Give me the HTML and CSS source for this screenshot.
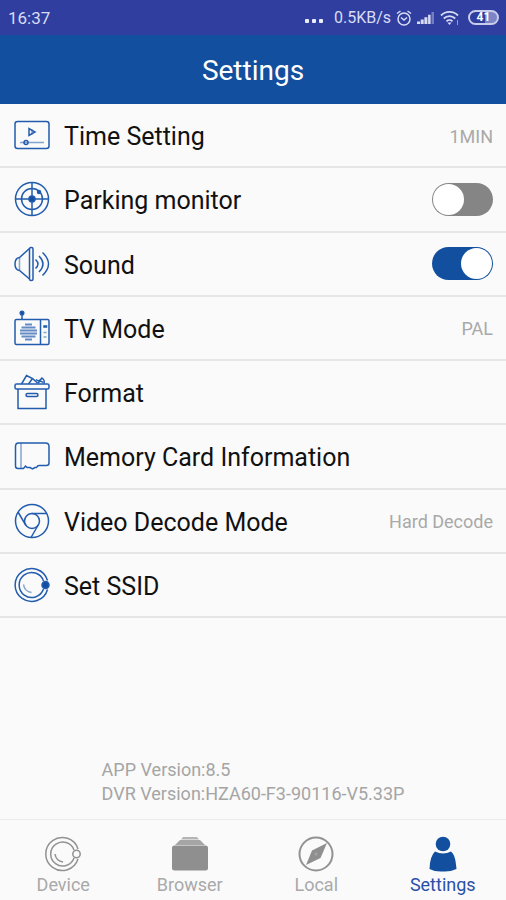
FILE: index.html
```html
<!DOCTYPE html>
<html lang="en">
<head>
<meta charset="utf-8">
<meta name="viewport" content="width=device-width, initial-scale=1">
<title>Settings</title>
<link rel="stylesheet" href="styles.css">
</head>
<body>
<div class="status">
  <time>16:37</time>
  <div class="status-right">
    <span class="dots"><i></i><i></i><i></i></span>
    <span class="speed">0.5KB/s</span>
    <svg class="alarm" width="16" height="18" viewBox="0 0 16 18" fill="none" stroke="currentColor" stroke-width="1.5"><circle cx="8" cy="10" r="6"/><path d="M1 4.500 4.500 2M15 4.500 11.500 2M5 8.500l3 2.500 3-2.500"/></svg>
    <svg class="signal" width="18" height="14" viewBox="0 0 18 14" fill="currentColor"><path d="M0 10.500h3V13H0zM3.700 8.500h3V13h-3zM7.400 6.200h3V13h-3zM11.100 3.800h2.500V13h-2.500z"/><path d="M14.500 1H17v12h-2.500z" opacity=".4"/></svg>
    <svg class="wifi" width="20" height="16" viewBox="0 0 20 16" fill="none" stroke="currentColor" stroke-width="1.800"><path d="M1 5.500a12 12 0 0 1 17 0M3.800 8.500a8 8 0 0 1 11.400 0M6.500 11.300a4.300 4.300 0 0 1 6 0"/><path d="m7.500 12.500 2 2.500 2-2.500z" fill="currentColor" stroke="none"/><path d="M17.500 10v5" stroke-width="1" opacity=".6"/></svg>
    <span class="battery">41</span>
  </div>
</div>
<header class="bar"><h1>Settings</h1></header>
<main>
  <ul class="list">
    <li class="row">
      <svg class="icon" viewBox="0 0 36 36"><rect x="1" y="4.500" width="34" height="27" rx="2.500"/><path d="M15 11.500v7l6-3.500z"/><path class="soft-line" d="M6 25.500h24M18 12.500v5"/><circle cx="12" cy="25.500" r="2"/></svg>
      <span class="label">Time Setting</span><span class="value">1MIN</span>
    </li>
    <li class="row">
      <svg class="icon" viewBox="0 0 36 36"><circle cx="18" cy="18" r="16.500"/><circle cx="18" cy="18" r="10.500"/><path d="M1 18h34M18 1v34"/><circle class="fill" cx="18" cy="18" r="3"/><circle class="fill" cx="25" cy="11" r="1.500"/></svg>
      <label class="label" for="parking">Parking monitor</label><input class="switch" type="checkbox" role="switch" id="parking">
    </li>
    <li class="row">
      <svg class="icon" viewBox="0 0 36 36"><path d="M15.500 2.500 5.500 11.500Q1 12 1 18t4.500 6.500l10 8.500"/><path class="soft-line" d="M5.500 12v12"/><rect x="15.500" y="1.500" width="3.500" height="33" rx="1.500"/><path d="M21.500 13.500q5 4.500 0 9M25 10q8 8 0 16M28.500 6.500q12 11.500 0 23"/></svg>
      <label class="label" for="sound">Sound</label><input class="switch" type="checkbox" role="switch" id="sound" checked>
    </li>
    <li class="row">
      <svg class="icon" viewBox="0 0 36 36"><rect x="1" y="9.500" width="34" height="25" rx="1.500"/><path d="M26.500 10v24M8 9V3.500"/><path class="soft-line" d="M29.500 22.500h3M29.500 27h3"/><circle class="fill" cx="8" cy="3" r="1.800"/><rect class="fill" x="30" y="16" width="2.500" height="1"/><path class="bars" d="M11 14.500h7M7.500 17.500h14M6 20.500h17M6 23.500h17M7.500 26.500h14M11 29.500h7"/></svg>
      <span class="label">TV Mode</span><span class="value">PAL</span>
    </li>
    <li class="row">
      <svg class="icon" viewBox="0 0 36 36"><rect x="1" y="10" width="34" height="5" rx="1.500"/><path d="M4 15v19.500h28V15"/><rect x="12" y="19.500" width="12" height="3" rx="1.500"/><path d="m7.500 10 5-8.500 6 3-4 5.500M18.500 4.500l5 4.500M22 5.500q3 3 6-1.500 3 2 2 5.500M24 9.500q2-4 5-1"/></svg>
      <span class="label">Format</span>
    </li>
    <li class="row">
      <svg class="icon" viewBox="0 0 36 36"><path d="M4.500 5h27Q35 5 35 8.500V25q0 2.500-2.500 2.500H25q-1.500 0-2.500 2h-1.500l-2.500 1.500-2.500-1.500h-3L11.500 28l-2 2.500H4q-2.500 0-2.500-2.500V8.500Q1.500 5 4.500 5z"/><path class="soft-line" d="M7 5v25"/></svg>
      <span class="label">Memory Card Information</span>
    </li>
    <li class="row">
      <svg class="icon" viewBox="0 0 36 36"><circle cx="18" cy="18" r="16.500"/><circle cx="18" cy="18" r="7.500"/><path d="M17.500 10.500H33M12 22.500 4 9M24.500 21.500 17 34.500"/></svg>
      <span class="label">Video Decode Mode</span><span class="value">Hard Decode</span>
    </li>
    <li class="row">
      <svg class="icon" viewBox="0 0 36 36"><path d="M33.500 13.500A16.500 16.500 0 1 0 33.500 22.500M29.500 14A12.500 12.500 0 1 0 29.500 22"/><path class="soft-line" d="M9.500 17.500q1 7 8 8"/><circle class="fill" cx="31.500" cy="18" r="3.500"/></svg>
      <span class="label">Set SSID</span>
    </li>
  </ul>
  <div class="versions">
    <p>APP Version:8.5</p>
    <p>DVR Version:HZA60-F3-90116-V5.33P</p>
  </div>
</main>
<nav class="tabs">
  <a class="tab" href="#device">
    <svg viewBox="0 0 36 36"><path d="M33 13A16.500 16.500 0 1 0 33 23M29 14A12 12 0 1 0 29 22"/><path d="M10 18q1 7 8 8"/><circle cx="31.500" cy="18" r="3.700"/></svg>
    Device</a>
  <a class="tab" href="#browser">
    <svg viewBox="0 0 36 36"><rect class="fill" y="9.500" width="36" height="25" rx="2.500"/><path class="soft" d="M3 9 8 4h20l5 5z"/><path class="softer" d="M9 3.500 11 1h14l2 2.500z"/></svg>
    Browser</a>
  <a class="tab" href="#local">
    <svg viewBox="0 0 36 36"><circle class="ring" cx="18" cy="18" r="16.500"/><path class="fill" d="m29 7-6.500 15L8 29l6-14.500z"/><circle class="soft" cx="18" cy="18" r="1.500"/></svg>
    Local</a>
  <a class="tab active" href="#settings" aria-current="page">
    <svg viewBox="0 0 36 36"><circle class="fill" cx="18" cy="8" r="7.300"/><path class="fill" d="M10 15.500q8 4 16 0 4 3 5 13l.5 4.500Q25 36 18 35.500 10 36 4.500 33q.5-13 5.500-17.500z"/></svg>
    Settings</a>
</nav>
</body>
</html>
```
FILE: styles.css
```css
* { box-sizing: border-box; }
body {
  margin: 0;
  min-height: 100vh;
  display: flex;
  flex-direction: column;
  background: #fafafa;
  color: #111;
  font-family: Roboto, "Liberation Sans", sans-serif;
}
h1, p, ul { margin: 0; padding: 0; }

.status {
  display: flex;
  align-items: center;
  justify-content: space-between;
  height: 35px;
  padding: 0 7px 0 8px;
  background: #303f9f;
  color: #d9dcf5;
  font-size: 17px;
}
.status-right { display: flex; align-items: center; gap: 5px; }
.dots { display: flex; gap: 3px; padding: 6px 6px 0 0; }
.dots i { width: 4px; height: 4px; border-radius: 1px; background: #eceefa; }
.speed { font-size: 16px; }
.battery {
  width: 31px;
  height: 15px;
  margin-left: 3px;
  border: 2px solid #c9cdec;
  border-radius: 8px;
  background: linear-gradient(90deg, #303f9f 55%, #7c86c6 55%);
  color: #fff;
  font-size: 12px;
  font-weight: 700;
  line-height: 11px;
  text-align: center;
}

.bar {
  display: flex;
  align-items: center;
  justify-content: center;
  height: 69px;
  padding-top: 2px;
  background: #124f9e;
  color: #fff;
}
.bar h1 { font-size: 28px; font-weight: 400; }

main { flex: 1; display: flex; flex-direction: column; }
.list {
  display: grid;
  grid-auto-rows: 1fr;
  min-height: 514px;
  list-style: none;
}
.row {
  display: flex;
  align-items: center;
  gap: 14px;
  padding: 0 13px 0 14px;
  border-bottom: 2px solid #e5e5e5;
}
.icon { flex: none; width: 36px; height: 36px; }
.icon, .tab svg { fill: none; }
.icon { stroke: #225caf; stroke-width: 1.5; }
.icon .soft-line { opacity: .55; }
.icon .bars { stroke-width: 2; opacity: .7; }
.icon .fill { fill: #124f9e; }
.label { flex: 1; padding-top: 3px; font-size: 25px; }
.value { padding-top: 2px; color: #a9a9a9; font-size: 18px; }

.switch {
  appearance: none;
  display: flex;
  width: 61px;
  height: 33px;
  margin: 0;
  padding: 1px;
  border-radius: 17px;
  background: #858585;
}
.switch::before {
  content: "";
  width: 31px;
  height: 31px;
  border-radius: 50%;
  background: #fff;
}
.switch:checked { justify-content: flex-end; background: #124f9e; }

.versions {
  align-self: center;
  margin-top: auto;
  padding-bottom: 13px;
  color: #a5a5a5;
  font-size: 18px;
  line-height: 24px;
}

.tabs {
  display: grid;
  grid-template-columns: repeat(4, 1fr);
  height: 81px;
  border-top: 1px solid #ececec;
}
.tab {
  display: flex;
  flex-direction: column;
  align-items: center;
  gap: 2px;
  padding-top: 16px;
  color: #a9a9a9;
  font-size: 18px;
  text-decoration: none;
}
.tab svg { width: 36px; height: 36px; stroke: #929292; stroke-width: 1.5; }
.tab .ring { stroke-width: 2; }
.tab .fill { fill: #8f8f8f; stroke: none; }
.tab .soft { fill: #a5a5a5; stroke: none; }
.tab .softer { fill: #b5b5b5; stroke: none; }
.tab.active { color: #2a50a8; }
.tab.active .fill { fill: #124f9e; }
```
